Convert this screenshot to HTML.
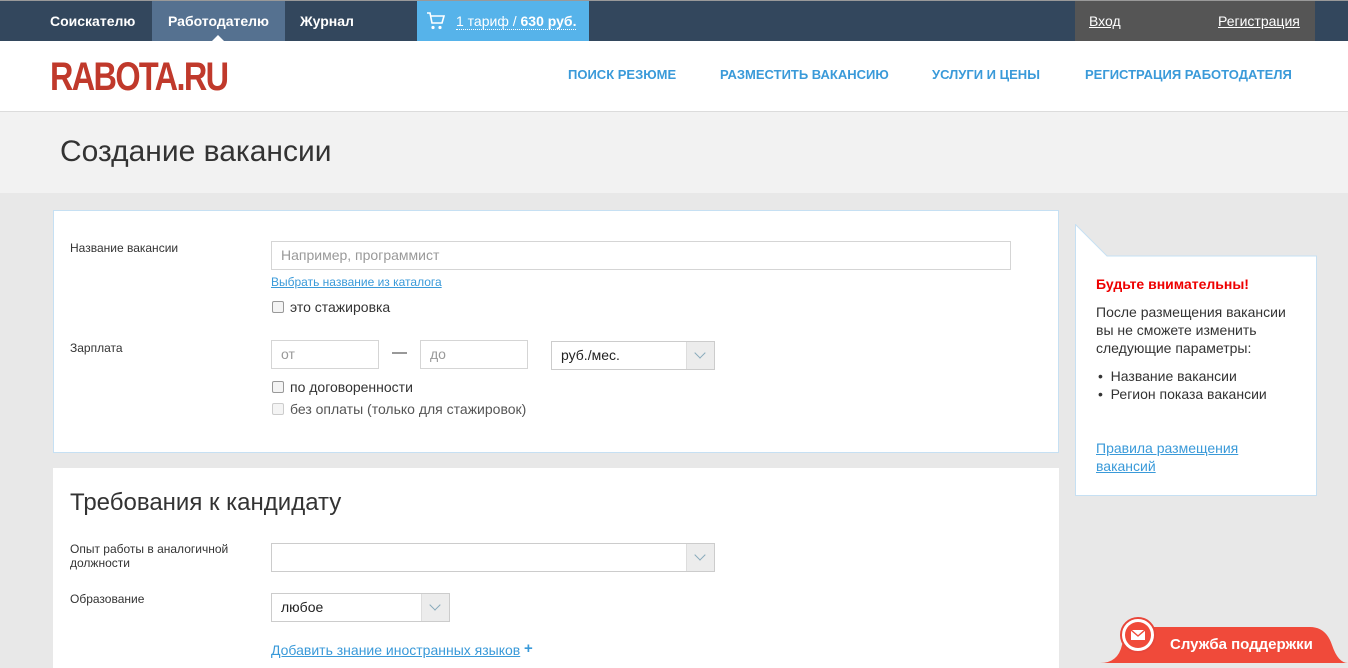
<!DOCTYPE html>
<html><head><meta charset="utf-8"><style>
*{box-sizing:border-box;margin:0;padding:0}
body{width:1348px;height:663px;overflow:hidden;background:#e8e8e8;font-family:"Liberation Sans",Arial,sans-serif;position:relative;color:#333}
.a{position:absolute}
.top{left:0;top:0;width:1348px;height:41px;background:#33475d;border-top:1px solid #999}
.top .t{position:absolute;top:0;height:40px;line-height:40px;color:#fff;font-weight:bold;font-size:14px}
.hdr{left:0;top:41px;width:1348px;height:71px;background:#fff;border-bottom:1px solid #dcdcdc}
.nav{top:67px;font-size:13px;color:#3a9ad9;font-weight:bold;letter-spacing:0}
.band{left:0;top:112px;width:1348px;height:81px;background:#f2f2f2}
.card{background:#fff;border:1px solid #c6e0f3}
.lbl{font-size:12px;color:#333}
.inp{background:#fff;border:1px solid #d5d5d5;height:29px;font-size:14px;color:#999;padding-left:9px;line-height:27px}
.cb{width:12px;height:12px;border:1px solid #999;border-radius:2px;background:#f4f4f4}
.sel{background:#fff;border:1px solid #ccc;height:29px;font-size:14px;color:#222;padding-left:9px;line-height:27px}
.sel .ar{position:absolute;right:0;top:0;width:28px;height:27px;background:#ececec;border-left:1px solid #ddd}
.sel .ar:after{content:"";position:absolute;left:9px;top:7px;width:7px;height:7px;border-right:1px solid #8ab;border-bottom:1px solid #8ab;transform:rotate(45deg)}
.lk{color:#3a9ad9;text-decoration:underline}
</style></head><body>
<div class="a top">
<div class="t" style="left:50px">Соискателю</div>
<div class="t" style="left:152px;width:133px;background:#557190;text-align:center">Работодателю</div>
<div class="t" style="left:300px">Журнал</div>
<div class="t" style="left:417px;width:172px;background:#56b3ea;font-weight:normal">
<svg class="a" style="left:9px;top:11px" width="20" height="18" viewBox="0 0 20 18"><path d="M1 1h3l2 10h10l2-7H5" fill="none" stroke="#fff" stroke-width="1.6"/><circle cx="7" cy="15.5" r="1.6" fill="#fff"/><circle cx="14" cy="15.5" r="1.6" fill="#fff"/></svg>
<span style="position:absolute;left:39px;border-bottom:1px dotted #fff;line-height:16px;top:12px">1 тариф / <b>630 руб.</b></span></div>
<div class="t" style="left:1075px;width:240px;background:#555;font-weight:normal">
<span style="position:absolute;left:14px;text-decoration:underline">Вход</span>
<span style="position:absolute;left:143px;text-decoration:underline">Регистрация</span></div>
</div>
<div class="a hdr"></div>
<div class="a" style="left:212px;top:29px;width:0;height:0;border:6px solid transparent;border-bottom-color:#fff;z-index:5"></div>
<div class="a" style="left:50px;top:56px;font-size:40px;font-weight:bold;color:#c0392b;letter-spacing:-2px;transform:scaleX(0.81);transform-origin:left;line-height:42px">RABOTA.RU</div>
<div class="a nav" style="left:568px">ПОИСК РЕЗЮМЕ</div>
<div class="a nav" style="left:720px">РАЗМЕСТИТЬ ВАКАНСИЮ</div>
<div class="a nav" style="left:932px">УСЛУГИ И ЦЕНЫ</div>
<div class="a nav" style="left:1085px">РЕГИСТРАЦИЯ РАБОТОДАТЕЛЯ</div>
<div class="a band"></div>
<div class="a" style="left:60px;top:135px;font-size:30px;color:#333">Создание вакансии</div>

<div class="a card" style="left:53px;top:210px;width:1006px;height:243px"></div>
<div class="a lbl" style="left:70px;top:241px">Название вакансии</div>
<div class="a inp" style="left:271px;top:241px;width:740px">Например, программист</div>
<div class="a lbl lk" style="left:271px;top:275px">Выбрать название из каталога</div>
<div class="a cb" style="left:272px;top:301px"></div>
<div class="a" style="left:290px;top:299px;font-size:14px">это стажировка</div>
<div class="a lbl" style="left:70px;top:341px">Зарплата</div>
<div class="a inp" style="left:271px;top:340px;width:108px">от</div>
<div class="a" style="left:392px;top:344px;font-size:15px">—</div>
<div class="a inp" style="left:420px;top:340px;width:108px">до</div>
<div class="a sel" style="left:551px;top:341px;width:164px">руб./мес.<div class="ar"></div></div>
<div class="a cb" style="left:272px;top:381px"></div>
<div class="a" style="left:290px;top:379px;font-size:14px">по договоренности</div>
<div class="a cb" style="left:272px;top:403px;border-color:#ccc"></div>
<div class="a" style="left:290px;top:401px;font-size:14px;color:#555">без оплаты (только для стажировок)</div>

<div class="a" style="left:53px;top:468px;width:1006px;height:200px;background:#fff"></div>
<div class="a" style="left:70px;top:489px;font-size:24px;color:#333">Требования к кандидату</div>
<div class="a lbl" style="left:70px;top:542px;line-height:14px">Опыт работы в аналогичной<br>должности</div>
<div class="a sel" style="left:271px;top:543px;width:444px"><div class="ar"></div></div>
<div class="a lbl" style="left:70px;top:592px">Образование</div>
<div class="a sel" style="left:271px;top:593px;width:179px">любое<div class="ar"></div></div>
<div class="a lk" style="left:271px;top:642px;font-size:14px">Добавить знание иностранных языков</div>
<div class="a" style="left:524px;top:640px;font-size:15px;color:#3a9ad9;font-weight:bold">+</div>

<svg class="a" style="left:1075px;top:224px" width="243" height="272"><path d="M0.5 0.5 L32 32 H241.5 V271.5 H0.5 Z" fill="#fff" stroke="#c6e0f3"/></svg>
<div class="a" style="left:1096px;top:276px;font-size:14px;font-weight:bold;color:#e00">Будьте внимательны!</div>
<div class="a" style="left:1096px;top:303px;font-size:14px;line-height:18px;color:#333">После размещения вакансии<br>вы не сможете изменить<br>следующие параметры:</div>
<div class="a" style="left:1098px;top:367px;font-size:14px;line-height:18px">•&nbsp;&nbsp;Название вакансии<br>•&nbsp;&nbsp;Регион показа вакансии</div>
<div class="a lk" style="left:1096px;top:439px;font-size:14px;line-height:18px">Правила размещения<br>вакансий</div>

<svg class="a" style="left:1100px;top:615px" width="248" height="48"><path d="M0 48 Q18 48 22 30 Q26 12 46 12 H210 Q226 12 232 30 Q238 48 248 48 Z" fill="#f04a3a"/><circle cx="38" cy="20" r="17" fill="#fff" stroke="#e8463a" stroke-width="2"/><circle cx="38" cy="20" r="13" fill="#f04a3a"/><rect x="31" y="15" width="14" height="10" fill="#fff"/><path d="M31 15 L38 21 L45 15" fill="none" stroke="#f04a3a" stroke-width="1.4"/></svg>
<div class="a" style="left:1170px;top:636px;font-size:15px;color:#fff;font-weight:bold">Служба поддержки</div>
</body></html>
